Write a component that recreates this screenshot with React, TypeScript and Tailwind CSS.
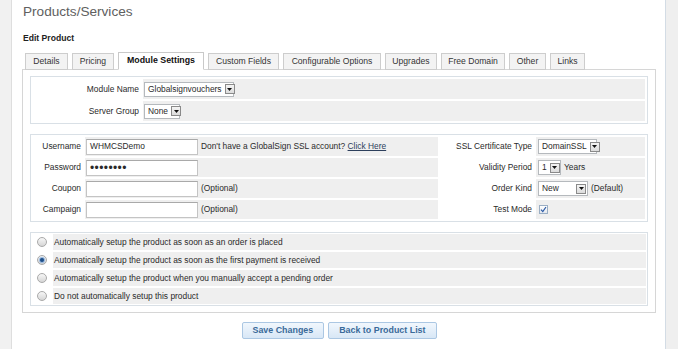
import React from 'react'

const tabs = [
  { name: 'Details', w: 'w-[43px]' },
  { name: 'Pricing', w: 'w-[42px]' },
  { name: 'Module Settings', w: 'w-[86px]', active: true },
  { name: 'Custom Fields', w: 'w-[71px]' },
  { name: 'Configurable Options', w: 'w-[98px]' },
  { name: 'Upgrades', w: 'w-[52px]' },
  { name: 'Free Domain', w: 'w-[64px]' },
  { name: 'Other', w: 'w-[37px]' },
  { name: 'Links', w: 'w-[35px]' },
]

const setupOptions = [
  'Automatically setup the product as soon as an order is placed',
  'Automatically setup the product as soon as the first payment is received',
  'Automatically setup the product when you manually accept a pending order',
  'Do not automatically setup this product',
]

function Arrow() {
  return (
    <span className="ml-auto flex h-[10px] w-[10px] shrink-0 items-center justify-center border border-[#8a8a8a] bg-gradient-to-b from-[#f4f4f4] to-[#dcdcdc]">
      <svg width="5" height="3" viewBox="0 0 5 3">
        <path d="M0 0h5L2.5 3z" fill="#111" />
      </svg>
    </span>
  )
}

function Select({ value, className }: { value: string; className: string }) {
  return (
    <div
      className={`flex h-[15px] items-center gap-[3px] border border-[#b5b9bd] bg-white pl-[3px] pr-[1px] ${className}`}
    >
      <span className="whitespace-nowrap">{value}</span>
      <Arrow />
    </div>
  )
}

function TextInput({ children }: { children?: React.ReactNode }) {
  return (
    <div className="flex h-[16px] w-[112px] items-center border border-[#c4c4c4] border-t-[#a9a9a9] bg-white px-[3px]">
      {children}
    </div>
  )
}

function Radio({ checked }: { checked?: boolean }) {
  return (
    <span className="flex h-[10px] w-[10px] items-center justify-center rounded-full border border-[#a9a9a9] bg-gradient-to-b from-[#f7f7f7] to-[#d6d6d6]">
      {checked && (
        <span className="h-[4px] w-[4px] rounded-full bg-[#1e4f88] shadow-[0_0_1px_1px_#8fb2dc]" />
      )}
    </span>
  )
}

function Label({ children }: { children: React.ReactNode }) {
  return (
    <div className="flex items-center justify-end whitespace-nowrap bg-white pr-[2px]">
      {children}
    </div>
  )
}

function Field({ children, className = '' }: { children?: React.ReactNode; className?: string }) {
  return (
    <div className={`flex items-center gap-[3px] whitespace-nowrap bg-[#efefef] ${className}`}>
      {children}
    </div>
  )
}

export default function App() {
  return (
    <div className="flex h-[349px] w-[678px] overflow-hidden bg-white font-['Liberation_Sans',Arial,sans-serif] text-[8.4px] text-[#2a2a2a]">
      <div className="w-[12px] shrink-0 border-r border-[#dedede] bg-[#f1f1f1]" />

      <div className="w-[653px] shrink-0 px-[10px]">
        <h1 className="ml-[1px] pt-[3px] text-[13.6px] leading-[18px] text-[#606060]">
          Products/Services
        </h1>
        <div className="ml-[1px] mt-[11px] text-[8.6px] font-bold leading-[12px] text-[#222]">
          Edit Product
        </div>

        {/* Tabs */}
        <div className="relative z-10 -mb-px mt-[8px] flex h-[18px] items-end gap-[4px] pl-[3px]">
          {tabs.map((t) =>
            t.active ? (
              <div
                key={t.name}
                className={`${t.w} flex h-[18px] items-center justify-center border border-[#c9c9c9] border-b-white bg-white text-[8.8px] font-bold text-[#111]`}
              >
                {t.name}
              </div>
            ) : (
              <div
                key={t.name}
                className={`${t.w} flex h-[17px] items-center justify-center border border-[#cdcdcd] bg-[#f3f3f3] text-[8.6px] text-[#333]`}
              >
                {t.name}
              </div>
            )
          )}
        </div>

        {/* Panel */}
        <div className="flex w-[634px] flex-col gap-[10px] border border-[#d6d6d6] px-[7px] pb-[6px] pt-[6px]">
          <div className="grid grid-cols-[108px_1fr] grid-rows-[20px_20px] gap-[2px] border border-[#d9e0e6] bg-white p-[2px]">
            <Label>Module Name</Label>
            <Field className="pl-[1px]">
              <Select value="Globalsignvouchers" className="w-[90px]" />
            </Field>
            <Label>Server Group</Label>
            <Field className="pl-[1px]">
              <Select value="None" className="w-[36px]" />
            </Field>
          </div>

          <div className="grid grid-cols-[50px_353px_94px_1fr] grid-rows-[19px_19px_19px_19px] gap-[2px] border border-[#d9e0e6] bg-white p-[2px]">
            <Label>Username</Label>
            <Field className="pl-[1px]">
              <TextInput>WHMCSDemo</TextInput>
              <span>
                Don't have a GlobalSign SSL account?{' '}
                <span className="text-[#2d3f5c] underline">Click Here</span>
              </span>
            </Field>
            <Label>SSL Certificate Type</Label>
            <Field className="pl-[2px]">
              <Select value="DomainSSL" className="w-[59px]" />
            </Field>

            <Label>Password</Label>
            <Field className="pl-[1px]">
              <TextInput>
                <span className="text-[12px] leading-none tracking-[0.4px]">••••••••</span>
              </TextInput>
            </Field>
            <Label>Validity Period</Label>
            <Field className="pl-[2px]">
              <Select value="1" className="w-[23px]" />
              <span>Years</span>
            </Field>

            <Label>Coupon</Label>
            <Field className="pl-[1px]">
              <TextInput />
              <span>(Optional)</span>
            </Field>
            <Label>Order Kind</Label>
            <Field className="pl-[2px]">
              <Select value="New" className="w-[50px]" />
              <span>(Default)</span>
            </Field>

            <Label>Campaign</Label>
            <Field className="pl-[1px]">
              <TextInput />
              <span>(Optional)</span>
            </Field>
            <Label>Test Mode</Label>
            <Field className="pl-[3px]">
              <span className="flex h-[9px] w-[9px] items-center justify-center border border-[#9aaec4] bg-gradient-to-b from-white to-[#e4e8ee]">
                <svg width="7" height="7" viewBox="0 0 7 7">
                  <path d="M1 3.6 2.8 5.6 6 1" fill="none" stroke="#2a5aa6" strokeWidth="1.2" />
                </svg>
              </span>
            </Field>
          </div>

          <div className="grid grid-cols-[19px_1fr] grid-rows-[16px_16px_16px_16px] gap-[2px] border border-[#d9e0e6] bg-white p-[1px]">
            {setupOptions.map((o, i) => (
              <React.Fragment key={o}>
                <div className="flex items-center justify-center bg-white">
                  <Radio checked={i === 1} />
                </div>
                <Field className="pl-[1px]">{o}</Field>
              </React.Fragment>
            ))}
          </div>
        </div>

        {/* Buttons */}
        <div className="mt-[9px] flex w-[634px] justify-center gap-[4px]">
          <button className="h-[17px] rounded-[2px] border border-[#abc7e3] bg-gradient-to-b from-[#f1f7fd] to-[#d8e7f6] px-[10px] text-[8.9px] font-bold text-[#3a6a99]">
            Save Changes
          </button>
          <button className="h-[17px] rounded-[2px] border border-[#abc7e3] bg-gradient-to-b from-[#f1f7fd] to-[#d8e7f6] px-[10px] text-[8.9px] font-bold text-[#3a6a99]">
            Back to Product List
          </button>
        </div>
      </div>

      <div className="flex-1 border-l border-[#d3dce5] bg-[#efefef]" />
    </div>
  )
}
